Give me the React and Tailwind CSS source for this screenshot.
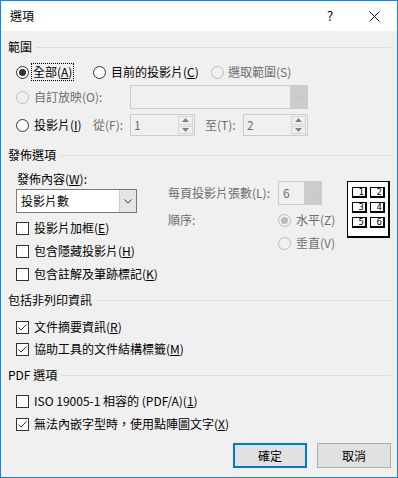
import React from "react";

function U({ children }) {
  return <span className="underline underline-offset-[1px]">{children}</span>;
}

function Radio({ checked, disabled }) {
  return (
    <span
      className={`w-[13px] h-[13px] rounded-full border shrink-0 flex items-center justify-center ${
        disabled ? "border-[#bcbcbc] bg-[#f0f0f0]" : "border-[#333333] bg-white"
      }`}
    >
      {checked && (
        <span className={`w-[7px] h-[7px] rounded-full ${disabled ? "bg-[#bcbcbc]" : "bg-[#333333]"}`} />
      )}
    </span>
  );
}

function Check({ checked }) {
  return (
    <span className="w-[13px] h-[13px] border border-[#333333] bg-white shrink-0 flex items-center justify-center">
      {checked && (
        <svg width="11" height="11" viewBox="0 0 11 11">
          <path d="M1.5 5.5 L4 8 L9.5 2.5" fill="none" stroke="#333333" strokeWidth="1" />
        </svg>
      )}
    </span>
  );
}

function CheckRow({ checked, children, className = "" }) {
  return (
    <div className={`flex items-center h-[16px] ${className}`}>
      <Check checked={checked} />
      <span className="ml-[5px]">{children}</span>
    </div>
  );
}

function Header({ children, className = "" }) {
  return (
    <div className={`flex items-center h-[16px] ${className}`}>
      <span>{children}</span>
      <span className="flex-1 h-px bg-[#dcdcdc] ml-[4px]" />
    </div>
  );
}

function Chevron({ color }) {
  return (
    <svg width="8" height="5" viewBox="0 0 8 5">
      <path d="M0.5 0.5 L4 4 L7.5 0.5" fill="none" stroke={color} strokeWidth="1" />
    </svg>
  );
}

function Spin({ value }) {
  return (
    <div className="w-[65px] h-[22px] border border-[#cccccc] bg-[#f0f0f0] flex">
      <span className="flex-1 pl-[3px] text-[#6d6d6d] leading-[20px]">{value}</span>
      <div className="w-[17px] flex flex-col gap-px p-px">
        <span className="flex-1 border border-[#d4d4d4] flex items-center justify-center">
          <svg width="7" height="4" viewBox="0 0 7 4">
            <path d="M0 4 L3.5 0 L7 4 Z" fill="#808080" />
          </svg>
        </span>
        <span className="flex-1 border border-[#d4d4d4] flex items-center justify-center">
          <svg width="7" height="4" viewBox="0 0 7 4">
            <path d="M0 0 L3.5 4 L7 0 Z" fill="#808080" />
          </svg>
        </span>
      </div>
    </div>
  );
}

function Cell({ n }) {
  return (
    <div className="w-[15px] h-[11px] border border-black border-r-2 border-b-2 bg-white text-[9px] leading-[9px] text-right pr-[1px] font-['DejaVu_Sans_Mono',monospace]">
      {n}
    </div>
  );
}

export default function App() {
  return (
    <div className="w-[398px] h-[478px] border border-[#1883d7] bg-[#f0f0f0] flex flex-col text-[12px] leading-[16px] text-black font-['Noto_Sans_CJK_TC','Noto_Sans',sans-serif]">
      <div className="h-[30px] bg-white flex items-center pl-[9px] shrink-0">
        <span className="flex-1">選項</span>
        <span className="w-[10px] text-[13px]">?</span>
        <span className="ml-[32px] mr-[17px] flex items-center">
          <svg width="11" height="11" viewBox="0 0 11 11">
            <path d="M0.5 0.5 L10.5 10.5 M10.5 0.5 L0.5 10.5" stroke="#111" strokeWidth="1" />
          </svg>
        </span>
      </div>

      <div className="flex flex-col pl-[7px] pr-[6px]">
        <Header className="mt-[8px]">範圍</Header>

        <div className="flex items-center h-[18px] mt-[8px]">
          <div className="w-[77px] ml-[8px] flex items-center">
            <Radio checked />
            <span className="ml-[2px] border border-dotted border-black px-[1px] leading-[16px]">
              全部(<U>A</U>)
            </span>
          </div>
          <div className="w-[118px] flex items-center">
            <Radio />
            <span className="ml-[5px]">
              目前的投影片(<U>C</U>)
            </span>
          </div>
          <div className="flex items-center text-[#6d6d6d]">
            <Radio disabled />
            <span className="ml-[4px]">選取範圍(S)</span>
          </div>
        </div>

        <div className="flex items-center h-[24px] mt-[4px]">
          <div className="w-[114px] ml-[8px] flex items-center text-[#6d6d6d]">
            <Radio disabled />
            <span className="ml-[5px]">自訂放映(O):</span>
          </div>
          <div className="w-[178px] h-[24px] border border-[#cccccc] bg-[#f0f0f0] flex justify-end">
            <span className="w-[17px] h-full bg-[#cccccc] flex items-center justify-center">
              <Chevron color="#bfbfbf" />
            </span>
          </div>
        </div>

        <div className="flex items-center h-[22px] mt-[5px]">
          <div className="w-[77px] ml-[8px] flex items-center">
            <Radio />
            <span className="ml-[5px]">
              投影片(<U>I</U>)
            </span>
          </div>
          <span className="w-[37px] text-[#6d6d6d]">從(F):</span>
          <Spin value="1" />
          <span className="w-[38px] ml-[10px] text-[#6d6d6d]">至(T):</span>
          <Spin value="2" />
        </div>

        <Header className="mt-[11px]">發佈選項</Header>

        <div className="flex">
          <div className="w-[152px] ml-[8px] flex flex-col">
            <div className="h-[16px] mt-[8px] ml-[1px]">
              發佈內容(<U>W</U>):
            </div>
            <div className="w-[121px] h-[24px] mt-[2px] border border-[#7a7a7a] bg-white flex">
              <span className="flex-1 pl-[4px] leading-[22px]">投影片數</span>
              <span className="w-[17px] h-full bg-[#e5e5e5] border-l border-[#cccccc] flex items-center justify-center">
                <Chevron color="#333333" />
              </span>
            </div>
            <CheckRow className="mt-[7px]">
              投影片加框(<U>E</U>)
            </CheckRow>
            <CheckRow className="mt-[7px]">
              包含隱藏投影片(<U>H</U>)
            </CheckRow>
            <CheckRow className="mt-[7px]">
              包含註解及筆跡標記(<U>K</U>)
            </CheckRow>
          </div>

          <div className="w-[179px] mt-[18px] flex flex-col text-[#6d6d6d]">
            <div className="flex items-center h-[24px]">
              <span className="w-[110px]">每頁投影片張數(L):</span>
              <div className="w-[44px] h-[24px] border border-[#cccccc] bg-[#f0f0f0] flex">
                <span className="flex-1 pl-[4px] leading-[22px]">6</span>
                <span className="w-[17px] h-full bg-[#cccccc] flex items-center justify-center">
                  <Chevron color="#bfbfbf" />
                </span>
              </div>
            </div>
            <div className="flex items-center h-[16px] mt-[7px]">
              <span className="w-[110px]">順序:</span>
              <Radio checked disabled />
              <span className="ml-[5px]">水平(Z)</span>
            </div>
            <div className="flex items-center h-[16px] mt-[7px]">
              <span className="w-[110px]" />
              <Radio disabled />
              <span className="ml-[5px]">垂直(V)</span>
            </div>
          </div>

          <div className="w-[43px] h-[57px] mt-[18px] border border-black border-r-2 border-b-2 bg-white pl-[4px] pt-[5px] grid grid-cols-[15px_15px] gap-x-[3px] gap-y-[4px] content-start">
            <Cell n="1" />
            <Cell n="2" />
            <Cell n="3" />
            <Cell n="4" />
            <Cell n="5" />
            <Cell n="6" />
          </div>
        </div>

        <Header className="mt-[10px]">包括非列印資訊</Header>
        <div className="flex flex-col ml-[8px]">
          <CheckRow checked className="mt-[11px]">
            文件摘要資訊(<U>R</U>)
          </CheckRow>
          <CheckRow checked className="mt-[6px]">
            協助工具的文件結構標籤(<U>M</U>)
          </CheckRow>
        </div>

        <Header className="mt-[10px]">PDF 選項</Header>
        <div className="flex flex-col ml-[8px]">
          <CheckRow className="mt-[10px]">
            ISO 19005-1 相容的 (PDF/A)(<U>1</U>)
          </CheckRow>
          <CheckRow checked className="mt-[7px]">
            無法內嵌字型時，使用點陣圖文字(<U>X</U>)
          </CheckRow>
        </div>

        <div className="flex justify-end gap-[10px] mt-[11px]">
          <button className="w-[74px] h-[25px] border-2 border-[#0078d7] bg-[#e1e1e1] flex items-center justify-center">
            確定
          </button>
          <button className="w-[74px] h-[25px] border border-[#adadad] bg-[#e1e1e1] flex items-center justify-center">
            取消
          </button>
        </div>
      </div>
    </div>
  );
}
